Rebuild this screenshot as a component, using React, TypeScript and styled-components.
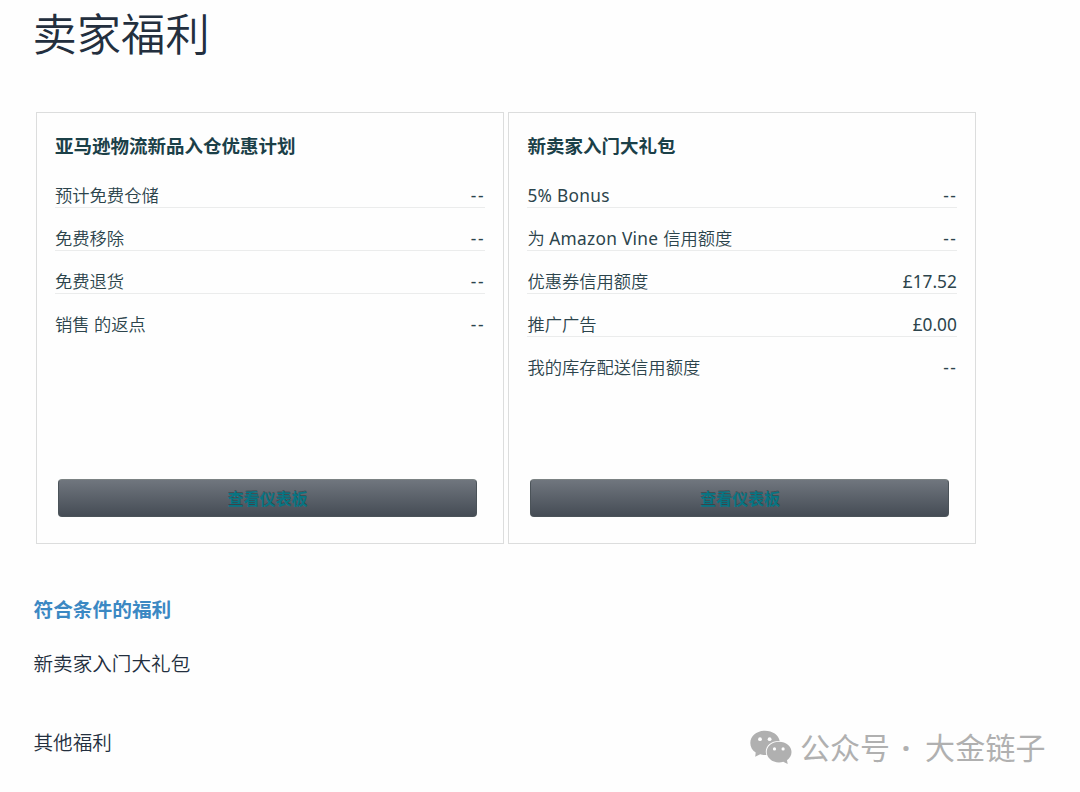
import React from 'react';
import styled, { createGlobalStyle } from 'styled-components';

const Global = createGlobalStyle`
  * { box-sizing: border-box; }
  body { margin: 0; background: #fefefe; color: #232f3e; font-family: "Noto Sans", "Noto Sans CJK SC", sans-serif; }
`;
const Page = styled.main`
  position: relative;
  width: 1080px;
  height: 792px;
  overflow: hidden;
  padding: 0 33.5px;
`;
const Title = styled.h1`
  margin: 0 0 0 -1px;
  height: 112px;
  padding-top: 4px;
  font-size: 44.3px;
  line-height: 60px;
  font-weight: 350;
`;
const Cards = styled.section`
  display: flex;
  gap: 4.4px;
  padding-left: 2.5px;
`;
const CardBox = styled.article`
  display: flex;
  flex-direction: column;
  width: 468px;
  height: 432px;
  padding: 20px 18.5px 26px 18px;
  border: 1px solid #dcdddd;
`;
const CardTitle = styled.h2`
  margin: 0 0 26px;
  font-size: 18.5px;
  line-height: 26px;
  font-weight: 700;
  color: #1b4048;
`;
const Row = styled.div`
  height: 43px;
  font-size: 17.3px;
  font-weight: 350;
  line-height: 22px;
  color: #2c444c;
`;
const Line = styled.div<{ $last: boolean }>`
  display: flex;
  justify-content: space-between;
  height: 23px;
  border-bottom: 1px solid ${p => (p.$last ? 'transparent' : '#ebecec')};
`;
const Latin = styled.span`
  font-weight: 400;
  letter-spacing: 0.3px;
`;
const Value = styled.span<{ $empty: boolean }>`
  font-weight: 400;
  letter-spacing: ${p => (p.$empty ? '1.6px' : '0')};
  margin-right: ${p => (p.$empty ? '-0.6px' : '0')};
`;
const Button = styled.button`
  width: 419px;
  height: 38px;
  margin: auto 0 0 3px;
  padding: 1px 0 0;
  border: 1px solid #4b5359;
  border-top-color: #7b8283;
  border-radius: 4px;
  background: linear-gradient(#70767e, #454c55);
  color: #087482;
  text-shadow: 0 -1px 0 rgba(0, 0, 0, 0.25);
  font: 700 16px/36px "Noto Sans", "Noto Sans CJK SC", sans-serif;
`;
const Heading = styled.h3`
  margin: 52px 0 0;
  font-size: 19.7px;
  line-height: 28px;
  color: #3b88c3;
`;
const Item = styled.p<{ $gap: number }>`
  margin: ${p => p.$gap}px 0 0;
  font-size: 19.6px;
  font-weight: 350;
  line-height: 28px;
`;
const Watermark = styled.div`
  position: absolute;
  left: 750px;
  top: 728px;
  display: flex;
  align-items: center;
  height: 40px;
  color: #b0b0b0;
  font-size: 30px;
  line-height: 40px;
`;
const Logo = styled.svg`
  width: 42px;
  height: 36px;
  margin-right: 8px;
`;
const Dot = styled.span`
  width: 35px;
  padding-right: 3px;
  text-align: center;
  font-weight: 700;
`;
const Account = styled.span`
  letter-spacing: 0.2px;
`;

type Entry = [string, string];

function Name({ text }: { text: string }) {
  return (
    <span>
      {text.split(/([A-Za-z0-9%][A-Za-z0-9% ]*)/).map((part, i) =>
        i % 2 ? <Latin key={i}>{part}</Latin> : part,
      )}
    </span>
  );
}

function Card({ title, rows }: { title: string; rows: Entry[] }) {
  return (
    <CardBox>
      <CardTitle>{title}</CardTitle>
      {rows.map(([name, value], i) => (
        <Row key={name}>
          <Line $last={i === rows.length - 1}>
            <Name text={name} />
            <Value $empty={value === '--'}>{value}</Value>
          </Line>
        </Row>
      ))}
      <Button>查看仪表板</Button>
    </CardBox>
  );
}

export default function App() {
  return (
    <Page>
      <Global />
      <Title>卖家福利</Title>
      <Cards>
        <Card title="亚马逊物流新品入仓优惠计划" rows={[['预计免费仓储', '--'], ['免费移除', '--'], ['免费退货', '--'], ['销售 的返点', '--']]} />
        <Card title="新卖家入门大礼包" rows={[['5% Bonus', '--'], ['为 Amazon Vine 信用额度', '--'], ['优惠券信用额度', '£17.52'], ['推广广告', '£0.00'], ['我的库存配送信用额度', '--']]} />
      </Cards>
      <Heading>符合条件的福利</Heading>
      <Item $gap={26}>新卖家入门大礼包</Item>
      <Item $gap={51}>其他福利</Item>
      <Watermark>
        <Logo viewBox="0 0 42 36" fill="#b0b0b0">
          <path d="M15 .8C6.7.8.3 6 .3 13c0 4 2 7.3 5.4 9.5l-.5 4.3 5-2.5c1.6.5 3.2.7 4.8.7h1.4c-.4-1.1-.6-2.1-.6-3.2 0-6.2 5.7-10.7 12.8-10.7h1.1C28.5 5 22.6.8 15 .8Z" />
          <path d="M29 11.7c-7 0-12.3 4.5-12.3 10.3S22 32.4 29 32.4c1.5 0 3-.2 4.3-.6l4.4 2.3-.7-3.9c2.9-2 4.5-4.8 4.5-8.2 0-5.8-5.5-10.3-12.5-10.3Z" />
          <g fill="#fefefe">
            <circle cx="10" cy="9.2" r="1.9" /><circle cx="19.6" cy="9.2" r="1.9" />
            <circle cx="24.5" cy="18.9" r="1.6" /><circle cx="33.1" cy="18.9" r="1.6" />
          </g>
        </Logo>
        <span>公众号</span>
        <Dot>·</Dot>
        <Account>大金链子</Account>
      </Watermark>
    </Page>
  );
}
